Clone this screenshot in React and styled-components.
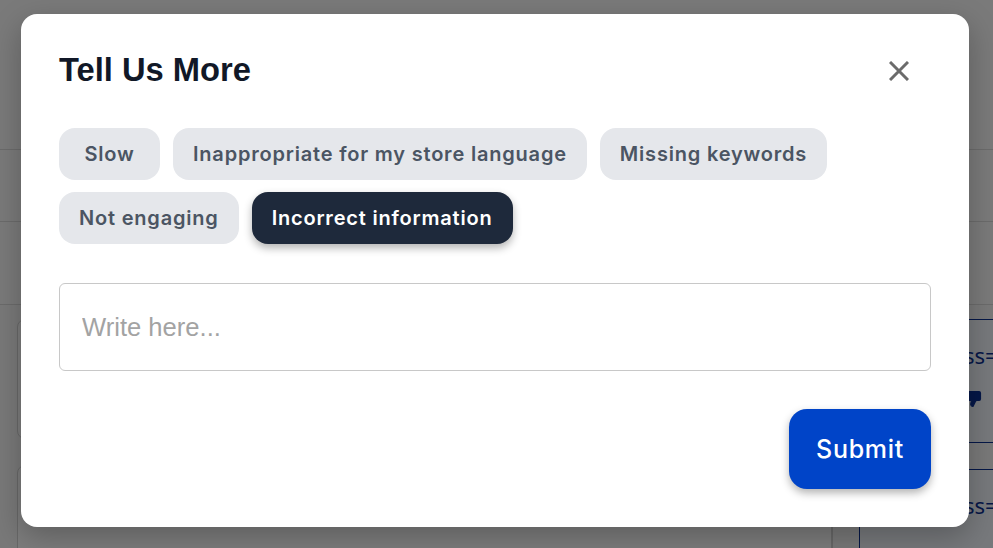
import React, { useState } from 'react';
import styled, { createGlobalStyle } from 'styled-components';
import { ThumbsDown } from 'lucide-react';

const GlobalStyle = createGlobalStyle`
  * { box-sizing: border-box; }
  html, body { margin: 0; padding: 0; }
  body {
    width: 993px;
    height: 548px;
    overflow: hidden;
    font-family: Inter, "Noto Sans", sans-serif;
    background: #ffffff;
  }
`

// page behind the dialog
const Page = styled.div`
  position: relative;
  width: 993px;
  height: 548px;
  background: #f3f3f3;
  overflow: hidden;
`
const PageBand = styled.div`
  height: ${p => p.h}px;
  border-bottom: 1px solid #d6d6d6;
  background: #f4f4f4;
`
const PageBody = styled.div`
  display: flex;
  gap: 26px;
  padding: 14px 0 0 17px;
`
const LeftColumn = styled.div`
  flex: 1;
  display: flex;
  flex-direction: column;
  gap: 26px;
  border-right: 1px solid #cfcfcf;
  min-height: 260px;
`
const GhostCard = styled.div`
  height: ${p => p.h}px;
  border: 1px solid #d0d0d0;
  border-radius: 8px;
  background: #fafafa;
`
const RightColumn = styled.div`
  width: 134px;
  display: flex;
  flex-direction: column;
  gap: 26px;
`
const BlueCard = styled.div`
  height: ${p => p.h}px;
  border: 1px solid #0b2f8f;
  border-right: none;
  border-radius: 4px 0 0 4px;
  background: #eef2f8;
  padding: 20px 0 0 104px;
  color: #0b2f8f;
  font-size: 22px;
  font-family: "Noto Sans", sans-serif;
  white-space: nowrap;
  display: flex;
  flex-direction: column;
  gap: 20px;
`

const Overlay = styled.div`
  position: absolute;
  inset: 0;
  background: rgba(0, 0, 0, 0.5);
  display: flex;
  align-items: flex-start;
  justify-content: flex-start;
  padding: 14px 0 0 21px;
`

const Modal = styled.div`
  width: 948px;
  height: 513px;
  background: #ffffff;
  border-radius: 16px;
  padding: 38px;
  display: flex;
  flex-direction: column;
  box-shadow: 0 10px 30px rgba(0, 0, 0, 0.25);
`
const Header = styled.div`
  display: flex;
  align-items: center;
  justify-content: space-between;
  height: 36px;
  margin-bottom: 40px;
`
const Title = styled.h2`
  margin: 0;
  font-family: "Liberation Sans", Arial, sans-serif;
  font-size: 32.7px;
  font-weight: 700;
  color: #111827;
`
const CloseButton = styled.button`
  border: none;
  background: none;
  padding: 0;
  margin: 2px 22px 0 0;
  width: 20px;
  height: 20px;
  display: flex;
  align-items: center;
  justify-content: center;
  cursor: pointer;
`
const Chips = styled.div`
  display: flex;
  flex-wrap: wrap;
  gap: 12px 13px;
  margin-bottom: 39px;
`
const Chip = styled.button`
  height: 52px;
  min-width: 101px;
  padding: 0 20px;
  border: none;
  border-radius: 16px;
  font-family: Inter, "Noto Sans", sans-serif;
  font-size: 20px;
  font-weight: 600;
  letter-spacing: 0.8px;
  cursor: pointer;
  background: ${p => (p.active ? '#1e293b' : '#e5e7eb')};
  color: ${p => (p.active ? '#ffffff' : '#4b5563')};
  box-shadow: ${p => (p.active ? '0 4px 8px rgba(0, 0, 0, 0.3)' : 'none')};
`
const Input = styled.input`
  width: 100%;
  height: 88px;
  border: 1px solid #c8c8c8;
  border-radius: 6px;
  padding: 0 22px;
  font-family: "Liberation Sans", Arial, sans-serif;
  font-size: 25.6px;
  color: #111827;
  outline: none;
  margin-bottom: 38px;
  &::placeholder { color: #a3a3a3; }
`
const Footer = styled.div`
  display: flex;
  justify-content: flex-end;
`
const SubmitButton = styled.button`
  width: 142px;
  height: 80px;
  border: none;
  border-radius: 18px;
  background: #0044c8;
  color: #ffffff;
  font-family: Inter, "Noto Sans", sans-serif;
  font-size: 25px;
  font-weight: 500;
  letter-spacing: 0.7px;
  box-shadow: 0 4px 8px rgba(0, 0, 0, 0.3);
  cursor: pointer;
`

const reasons = [
  'Slow',
  'Inappropriate for my store language',
  'Missing keywords',
  'Not engaging',
  'Incorrect information',
]

export default function App() {
  const [selected, setSelected] = useState('Incorrect information')
  return (
    <>
      <GlobalStyle />
      <Page>
        <PageBand h={150} />
        <PageBand h={72} />
        <PageBand h={83} />
        <PageBody>
          <LeftColumn>
            <GhostCard h={120} />
            <GhostCard h={120} />
          </LeftColumn>
          <RightColumn>
            <BlueCard h={124}>
              ss=
              <ThumbsDown size={18} fill="#0b2f8f" strokeWidth={1.5} />
            </BlueCard>
            <BlueCard h={120}>ss=</BlueCard>
          </RightColumn>
        </PageBody>
        <Overlay>
          <Modal>
            <Header>
              <Title>Tell Us More</Title>
              <CloseButton aria-label="Close">
                <svg width="20" height="20" viewBox="0 0 20 20" fill="none" stroke="#6b6b6b" strokeWidth="3">
                  <path d="M1 1 L19 19 M19 1 L1 19" />
                </svg>
              </CloseButton>
            </Header>
            <Chips>
              {reasons.map(r => (
                <Chip key={r} active={r === selected} onClick={() => setSelected(r)}>
                  {r}
                </Chip>
              ))}
            </Chips>
            <Input placeholder="Write here..." />
            <Footer>
              <SubmitButton>Submit</SubmitButton>
            </Footer>
          </Modal>
        </Overlay>
      </Page>
    </>
  )
}
